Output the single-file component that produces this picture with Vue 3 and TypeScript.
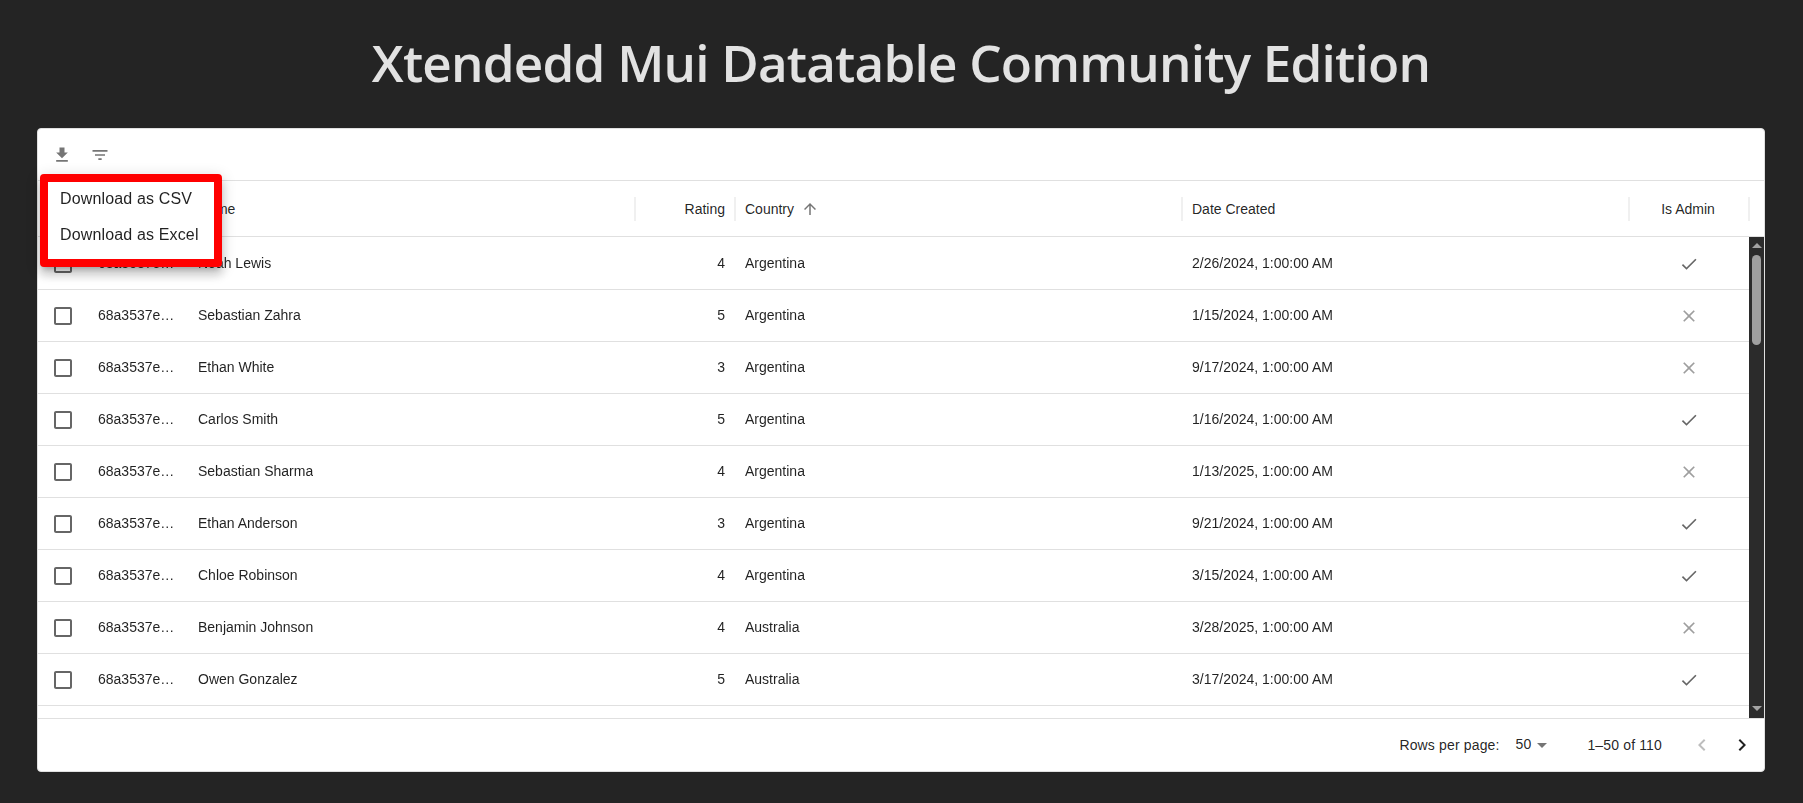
<script setup lang="ts">
interface Row {
  id: string
  name: string
  rating: number
  country: string
  created: string
  admin: boolean
}

const rows: Row[] = [
  { id: '68a3537e1c04a1', name: 'Noah Lewis', rating: 4, country: 'Argentina', created: '2/26/2024, 1:00:00 AM', admin: true },
  { id: '68a3537e1c04a2', name: 'Sebastian Zahra', rating: 5, country: 'Argentina', created: '1/15/2024, 1:00:00 AM', admin: false },
  { id: '68a3537e1c04a3', name: 'Ethan White', rating: 3, country: 'Argentina', created: '9/17/2024, 1:00:00 AM', admin: false },
  { id: '68a3537e1c04a4', name: 'Carlos Smith', rating: 5, country: 'Argentina', created: '1/16/2024, 1:00:00 AM', admin: true },
  { id: '68a3537e1c04a5', name: 'Sebastian Sharma', rating: 4, country: 'Argentina', created: '1/13/2025, 1:00:00 AM', admin: false },
  { id: '68a3537e1c04a6', name: 'Ethan Anderson', rating: 3, country: 'Argentina', created: '9/21/2024, 1:00:00 AM', admin: true },
  { id: '68a3537e1c04a7', name: 'Chloe Robinson', rating: 4, country: 'Argentina', created: '3/15/2024, 1:00:00 AM', admin: true },
  { id: '68a3537e1c04a8', name: 'Benjamin Johnson', rating: 4, country: 'Australia', created: '3/28/2025, 1:00:00 AM', admin: false },
  { id: '68a3537e1c04a9', name: 'Owen Gonzalez', rating: 5, country: 'Australia', created: '3/17/2024, 1:00:00 AM', admin: true },
]
</script>

<template>
  <div class="page">
    <h1 class="title">Xtendedd Mui Datatable Community Edition</h1>
    <div class="grid-card">
      <div class="toolbar">
        <button class="tool-btn">
          <svg viewBox="0 0 24 24"><path d="M5 20h14v-2H5zM19 9h-4V3H9v6H5l7 7z" /></svg>
        </button>
        <button class="tool-btn">
          <svg viewBox="0 0 24 24"><path d="M10 18h4v-2h-4v2zM3 6v2h18V6H3zm3 7h12v-2H6v2z" /></svg>
        </button>
      </div>

      <div class="menu">
        <div class="menu-item">Download as CSV</div>
        <div class="menu-item">Download as Excel</div>
      </div>

      <div class="header columns">
        <div class="head-cell"></div>
        <div class="head-cell">ID</div>
        <div class="head-cell sep">Name</div>
        <div class="head-cell sep right">Rating</div>
        <div class="head-cell sep">
          Country
          <svg class="sort-icon" viewBox="0 0 24 24"><path d="M4 12l1.41 1.41L11 7.83V20h2V7.83l5.58 5.59L20 12l-8-8-8 8z" /></svg>
        </div>
        <div class="head-cell sep">Date Created</div>
        <div class="head-cell sep center">Is Admin</div>
      </div>

      <div class="body">
        <div class="rows">
          <div v-for="row in rows" :key="row.id" class="row columns">
            <div class="cell checkbox-cell">
              <svg class="checkbox" viewBox="0 0 24 24"><path d="M19 5v14H5V5h14m0-2H5c-1.1 0-2 .9-2 2v14c0 1.1.9 2 2 2h14c1.1 0 2-.9 2-2V5c0-1.1-.9-2-2-2z" /></svg>
            </div>
            <div class="cell"><span class="clip">{{ row.id }}</span></div>
            <div class="cell"><span class="clip">{{ row.name }}</span></div>
            <div class="cell right">{{ row.rating }}</div>
            <div class="cell">{{ row.country }}</div>
            <div class="cell">{{ row.created }}</div>
            <div class="cell center">
              <svg v-if="row.admin" class="bool yes" viewBox="0 0 24 24"><path d="M9 16.17L4.83 12l-1.42 1.41L9 19 21 7l-1.41-1.41z" /></svg>
              <svg v-else class="bool no" viewBox="0 0 24 24"><path d="M19 6.41L17.59 5 12 10.59 6.41 5 5 6.41 10.59 12 5 17.59 6.41 19 12 13.41 17.59 19 19 17.59 13.41 12z" /></svg>
            </div>
          </div>
        </div>
        <div class="scrollbar">
          <span class="arrow up"></span>
          <div class="track"><div class="thumb"></div></div>
          <span class="arrow down"></span>
        </div>
      </div>

      <div class="footer">
        <span>Rows per page:</span>
        <div class="page-size">
          <span class="page-size-value">50</span>
          <svg viewBox="0 0 24 24"><path d="M7 10l5 5 5-5z" /></svg>
        </div>
        <span class="range">1–50 of 110</span>
        <div class="pager">
          <button class="page-btn disabled">
            <svg viewBox="0 0 24 24"><path d="M15.41 7.41L14 6l-6 6 6 6 1.41-1.41L10.83 12z" /></svg>
          </button>
          <button class="page-btn">
            <svg viewBox="0 0 24 24"><path d="M10 6L8.59 7.41 13.17 12l-4.58 4.59L10 18l6-6z" /></svg>
          </button>
        </div>
      </div>
    </div>
  </div>
</template>

<style>
html,
body {
  margin: 0;
  background: #242424;
}
</style>

<style scoped>
.page {
  height: 803px;
  box-sizing: border-box;
  padding: 0 38px 0 37px;
  overflow: hidden;
  font-family: "Liberation Sans", Arial, sans-serif;
  font-size: 14px;
  color: rgba(0, 0, 0, 0.87);
}

.title {
  margin: 0;
  padding-top: 32px;
  height: 128px;
  box-sizing: border-box;
  text-align: center;
  font-family: "Open Sans", sans-serif;
  font-size: 51.2px;
  line-height: 60px;
  font-weight: 600;
  letter-spacing: -0.8px;
  color: rgba(255, 255, 255, 0.87);
}

.grid-card {
  position: relative;
  height: 644px;
  box-sizing: border-box;
  display: flex;
  flex-direction: column;
  background: #fff;
  border: 1px solid #e0e0e0;
  border-radius: 4px;
}

.toolbar {
  height: 51px;
  flex: none;
  display: flex;
  align-items: center;
  gap: 18px;
  padding: 0 0 0 14px;
  border-bottom: 1px solid #e0e0e0;
  box-sizing: content-box;
}

.tool-btn {
  width: 20px;
  height: 20px;
  padding: 0;
  border: 0;
  background: none;
  display: block;
}

.tool-btn svg {
  display: block;
  width: 20px;
  height: 20px;
  fill: rgba(0, 0, 0, 0.54);
}

.menu {
  position: absolute;
  left: 2px;
  top: 45px;
  width: 166px;
  padding: 1px 0 8px;
  display: flex;
  flex-direction: column;
  gap: 4px;
  background: #fff;
  border: 8px solid #ff0000;
  border-radius: 4px;
  box-shadow: 0 5px 5px -3px rgba(0, 0, 0, 0.2), 0 8px 10px 1px rgba(0, 0, 0, 0.14), 0 3px 14px 2px rgba(0, 0, 0, 0.12);
  z-index: 5;
}

.menu-item {
  height: 32px;
  line-height: 32px;
  padding-left: 12px;
  font-size: 16px;
  letter-spacing: 0.15px;
  white-space: nowrap;
}

.columns {
  display: grid;
  grid-template-columns: 50px 100px 1fr 100px 1fr 1fr 120px;
}

.header {
  height: 55px;
  flex: none;
  padding-right: 15px;
  border-bottom: 1px solid #e0e0e0;
}

.head-cell {
  position: relative;
  display: flex;
  align-items: center;
  padding: 0 10px;
  min-width: 0;
}

.head-cell.sep::after {
  content: "";
  position: absolute;
  right: -1px;
  top: 16px;
  width: 2px;
  height: 24px;
  background: #f0f0f0;
}

.head-cell.center {
  padding-right: 12px;
}

.right {
  justify-content: flex-end;
}

.center {
  justify-content: center;
}

.sort-icon {
  width: 18px;
  height: 18px;
  margin-left: 7px;
  fill: rgba(0, 0, 0, 0.54);
}

.body {
  flex: 1;
  min-height: 0;
  display: flex;
  overflow: hidden;
}

.rows {
  flex: 1;
  min-width: 0;
  padding-top: 1px;
  overflow: hidden;
  will-change: transform;
}

.row {
  height: 51px;
  border-bottom: 1px solid #e0e0e0;
  box-sizing: content-box;
}

.cell {
  display: flex;
  align-items: center;
  padding: 0 10px 2px;
  min-width: 0;
}

.cell.center {
  padding-bottom: 0;
}

.clip {
  overflow: hidden;
  white-space: nowrap;
  text-overflow: ellipsis;
}

.checkbox-cell {
  justify-content: center;
  padding: 0;
}

.checkbox {
  width: 24px;
  height: 24px;
  fill: rgba(0, 0, 0, 0.6);
}

.bool {
  width: 20px;
  height: 20px;
}

.yes {
  fill: rgba(0, 0, 0, 0.6);
}

.no {
  fill: rgba(0, 0, 0, 0.38);
}

.scrollbar {
  width: 15px;
  flex: none;
  display: flex;
  flex-direction: column;
  align-items: center;
  background: #2b2b2b;
}

.track {
  flex: 1;
  width: 100%;
  padding-top: 7px;
}

.thumb {
  width: 9px;
  height: 90px;
  margin: 0 auto;
  border-radius: 5px;
  background: #9f9f9f;
}

.arrow {
  width: 0;
  height: 0;
  flex: none;
  border-left: 5px solid transparent;
  border-right: 5px solid transparent;
}

.arrow.up {
  margin-top: 6px;
  border-bottom: 5px solid #a3a3a3;
}

.arrow.down {
  margin-bottom: 7px;
  border-top: 5px solid #a3a3a3;
}

.footer {
  height: 52px;
  flex: none;
  display: flex;
  align-items: center;
  justify-content: flex-end;
  padding-right: 2px;
  border-top: 1px solid #e0e0e0;
  letter-spacing: 0.15px;
}

.page-size {
  display: flex;
  align-items: center;
  margin-left: 16px;
}

.page-size-value {
  padding-bottom: 2px;
}

.page-size svg {
  width: 24px;
  height: 24px;
  margin-left: -1px;
  fill: rgba(0, 0, 0, 0.54);
}

.range {
  margin-left: 33px;
}

.pager {
  display: flex;
  margin-left: 20px;
}

.page-btn {
  width: 40px;
  height: 40px;
  padding: 8px;
  border: 0;
  background: none;
}

.page-btn svg {
  display: block;
  width: 24px;
  height: 24px;
  fill: rgba(0, 0, 0, 0.87);
}

.page-btn.disabled svg {
  fill: rgba(0, 0, 0, 0.26);
}
</style>
